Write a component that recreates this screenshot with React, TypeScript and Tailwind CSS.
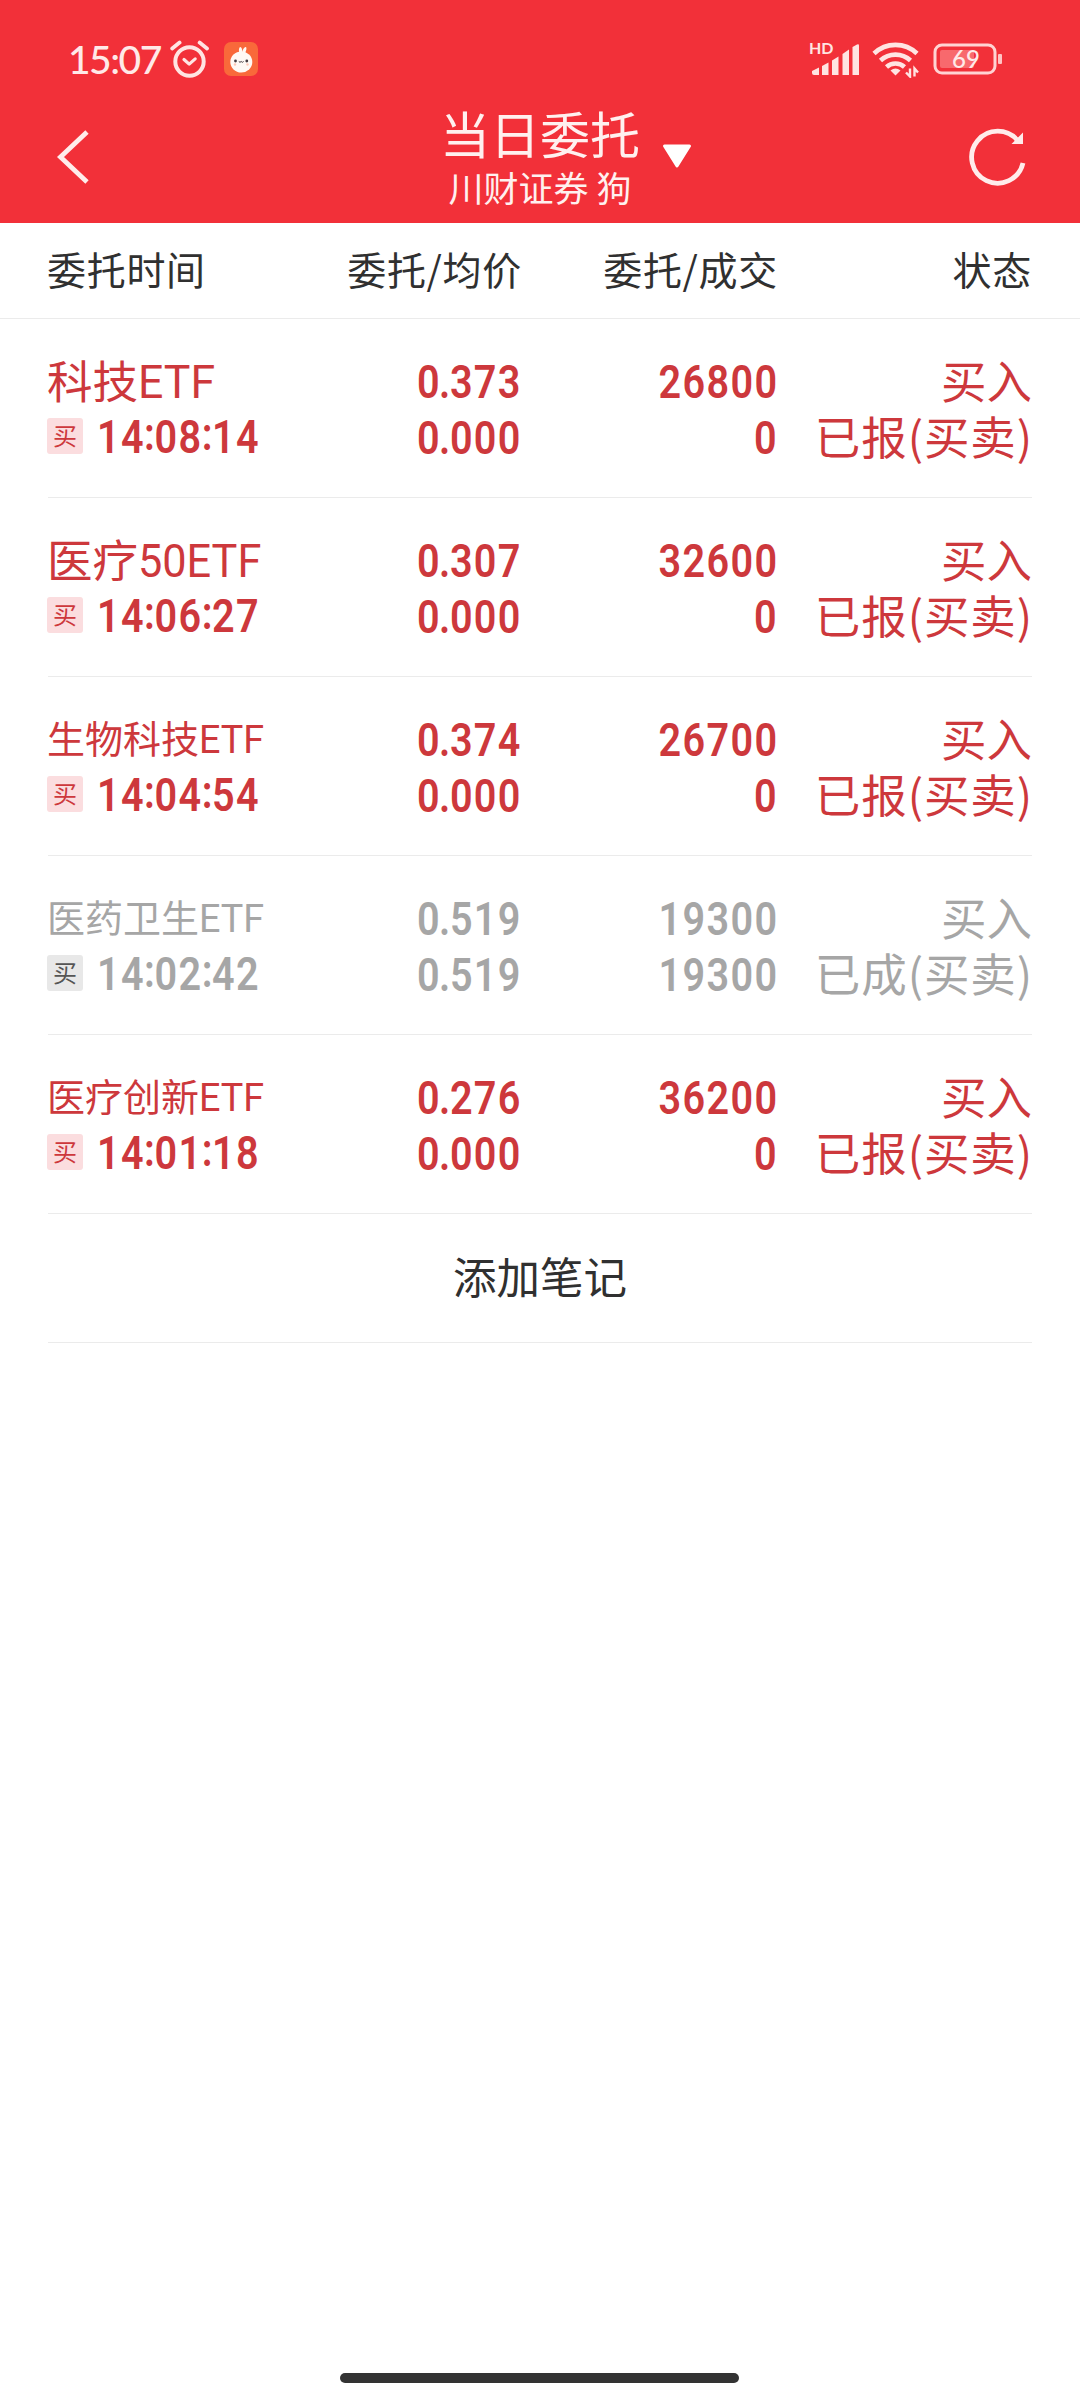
import React from "react";
import clsx from "clsx";

type Order = {
  id: number;
  name: string;
  code: string;
  time: string;
  price: string;
  avgPrice: string;
  amount: string;
  dealt: string;
  status: string;
  small?: boolean;
  done?: boolean;
};

const orders: Order[] = [
  { id: 1, name: "科技", code: "ETF", time: "14:08:14", price: "0.373", avgPrice: "0.000", amount: "26800", dealt: "0", status: "已报(买卖)" },
  { id: 2, name: "医疗", code: "50ETF", time: "14:06:27", price: "0.307", avgPrice: "0.000", amount: "32600", dealt: "0", status: "已报(买卖)" },
  { id: 3, name: "生物科技", code: "ETF", time: "14:04:54", price: "0.374", avgPrice: "0.000", amount: "26700", dealt: "0", status: "已报(买卖)", small: true },
  { id: 4, name: "医药卫生", code: "ETF", time: "14:02:42", price: "0.519", avgPrice: "0.519", amount: "19300", dealt: "19300", status: "已成(买卖)", small: true, done: true },
  { id: 5, name: "医疗创新", code: "ETF", time: "14:01:18", price: "0.276", avgPrice: "0.000", amount: "36200", dealt: "0", status: "已报(买卖)", small: true },
];

/* ================= STATUS BAR ================= */
const StatusBar = () => (
  <div className="flex h-[80px] items-end justify-between pl-[68px] pr-[75px]">
    <div className="flex h-[43px] items-center">
      <span className="mt-px w-[102px] whitespace-nowrap font-['Lato',sans-serif] text-[39px] leading-[43px] font-medium tracking-[-1.5px] text-[#ffe9e8]">
        15:07
      </span>
      <svg width="40" height="38" viewBox="0 0 40 38" fill="none" stroke="#ffe4e2" strokeLinecap="round">
        <circle cx="19.5" cy="21.5" r="14.2" strokeWidth="4" />
        <path d="M14 19.5l5.2 4.6 6-5.2" strokeWidth="3.2" strokeLinejoin="round" />
        <path d="M2.2 8.6l7.4-6M37 8.6l-7.4-6" strokeWidth="3.8" />
      </svg>
      <svg className="ml-[14px]" width="34" height="34" viewBox="0 0 34 34">
        <rect width="34" height="34" rx="7" fill="#f9693a" />
        <path d="M15.5 11c-1.2-3-.3-5.8.8-6 1.3 0 2 2.5 2 5 .6-3 2.2-5.4 3.5-5 1.2.6.6 3.8-.8 6.2z" fill="#fffaf5" />
        <ellipse cx="17.3" cy="20" rx="11" ry="10.5" fill="#fffaf5" />
        <circle cx="11.5" cy="19" r="1.4" fill="#453e42" />
        <circle cx="22.8" cy="19" r="1.4" fill="#453e42" />
        <path d="M14.8 19.5q1.2 1.6 2.4 0 1.2 1.6 2.4 0" stroke="#453e42" strokeWidth="1" fill="none" />
        <circle cx="11" cy="22.5" r="1.2" fill="#ffc9b8" />
        <circle cx="23.5" cy="22.5" r="1.2" fill="#ffc9b8" />
      </svg>
    </div>

    <div className="flex h-[43px] items-center">
      <div className="relative h-[36px] w-[52px]">
        <span className="absolute -top-px left-0 font-['Lato',sans-serif] text-[16px] leading-[16px] font-bold text-[#ffe4e2]">
          HD
        </span>
        <svg width="52" height="36" viewBox="0 0 52 36" fill="#ffe4e2">
          <path d="M3 30l7-3.5V34H5q-2 0-2-2z" />
          <path d="M13 25l6.5-3.5V34H13z" />
          <path d="M23 19.5l6.5-4V34H23z" />
          <path d="M33.5 13l6.5-4.5V34h-6.5z" />
          <path d="M43.5 6l4.5-2.5q2-1 2 1V34h-6.5z" />
        </svg>
      </div>
      <svg className="ml-[11px]" width="48" height="38" viewBox="0 0 48 38" fill="none" stroke="#ffe4e2" strokeWidth="4.6">
        <path d="M2 13.5a31 31 0 0 1 43 0" />
        <path d="M8.5 20.5a22 22 0 0 1 30 0" />
        <path d="M14.5 27a13.5 13.5 0 0 1 18 0" />
        <path d="M18.5 30.5q5-4 10 0l-5 5z" fill="#ffe4e2" stroke="none" />
        <path d="M38 28.5v8l-4-4M42.5 36.5v-8l3.5 4" strokeWidth="2.4" />
      </svg>
      <svg className="ml-[13px]" width="72" height="32" viewBox="0 0 72 32">
        <rect x="2" y="2" width="60" height="28" rx="7" fill="none" stroke="#ffd3d3" strokeWidth="3" />
        <rect x="7" y="7" width="34" height="18" rx="2" fill="#f8696d" />
        <rect x="65" y="11" width="4" height="10" rx="1" fill="#ffc4c4" />
        <text x="33" y="25" textAnchor="middle" fill="#ffe9e8" fontSize="24" fontWeight="500" fontFamily="Lato, sans-serif">
          69
        </text>
      </svg>
    </div>
  </div>
);

/* ================= TITLE BAR ================= */
const TitleBar = () => (
  <div className="flex h-[143px] items-start justify-between pl-[54px] pr-[50px] pt-[22px]">
    <svg className="mt-[25px]" width="40" height="60" viewBox="0 0 40 60" fill="none" stroke="#ffeceb" strokeWidth="4.8">
      <path d="M33 5L6.5 30 33 55" />
    </svg>

    <div className="ml-[73px] flex">
      <div className="flex w-[200px] flex-col items-center whitespace-nowrap text-[#fff0ef]">
        <h1 className="text-[50px] leading-[60px] font-normal">当日委托</h1>
        <p className="mt-[6px] text-[35px] leading-[38px] font-normal">川财证券 狗</p>
      </div>
      <svg className="ml-[21px] mt-[41px]" width="32" height="26" viewBox="0 0 32 26" fill="#fff" stroke="#fff" strokeWidth="3" strokeLinejoin="round">
        <path d="M3.5 3h25L16 23z" />
      </svg>
    </div>

    <svg className="mt-[24px]" width="64" height="60" viewBox="0 0 64 60" fill="none" stroke="#ffeceb" strokeWidth="4.8">
      <path d="M52 15A26 26 0 1 0 57 37" />
      <path d="M57 6.5v11.5H45.5z" fill="#ffeceb" stroke="none" />
    </svg>
  </div>
);

/* Narrow digits with tight separators */
const Num = ({ value, left }: { value: string; left?: boolean }) => (
  <span
    className={clsx(
      "inline-block scale-x-[0.86] font-['Roboto',sans-serif] text-[46px] font-semibold tracking-[1.6px]",
      left ? "origin-left" : "origin-right"
    )}
  >
    {value.split(/([.:])/).map((part, i) => (
      <span
        key={i}
        className={clsx(
          part === "." && "-ml-[2.5px] tracking-[-0.3px]",
          part === ":" && "relative -top-[3px] -ml-px tracking-[-0.4px]"
        )}
      >
        {part}
      </span>
    ))}
  </span>
);

const OrderRow = ({ order }: { order: Order }) => (
  <div
    className={clsx(
      "grid h-[179px] grid-cols-[218px_256px_256px_254px] grid-rows-[56px_56px] border-b border-[#ebebeb] pt-[35px] leading-[56px] whitespace-nowrap",
      order.done ? "text-[#a6a6a6]" : "text-[#cd383c]"
    )}
  >
    <div className={clsx("-ml-px flex", order.small ? "text-[38px]" : "text-[45.5px]")}>
      <span className="-mt-[3px]">{order.name}</span>
      <span
        className={clsx(
          "origin-left font-['Roboto',sans-serif]",
          order.small ? "scale-x-[0.98] text-[38.5px]" : "text-[46px]",
          !order.small && (order.code === "ETF" ? "scale-x-[0.97]" : "scale-x-[0.94]")
        )}
      >
        {order.code}
      </span>
    </div>
    <div className="text-right"><Num value={order.price} /></div>
    <div className="text-right"><Num value={order.amount} /></div>
    <div className="-mt-[3px] text-right text-[45.5px]">买入</div>

    <div className="flex items-center">
      <span
        className={clsx(
          "-ml-px -mt-[4px] size-[36px] shrink-0 rounded-[3px] text-center text-[24px] leading-[34px]",
          order.done ? "bg-[#e8e8e8] text-[#555555]" : "bg-[#fbdddf]"
        )}
      >
        买
      </span>
      <span className="ml-[14px] mt-[7px]">
        <Num value={order.time} left />
      </span>
    </div>
    <div className="text-right"><Num value={order.avgPrice} /></div>
    <div className="text-right"><Num value={order.dealt} /></div>
    <div className="-mt-[3px] -mr-px flex justify-end text-[45.5px] tracking-[0.9px]">{order.status}</div>
  </div>
);

const App = () => {
  return (
    <div className="flex h-[2400px] w-[1080px] flex-col bg-white font-['Noto_Sans_CJK_SC',sans-serif]">
      <header className="h-[223px] bg-[#f23039]">
        <StatusBar />
        <TitleBar />
      </header>

      {/* ===== Column heads ===== */}
      <div className="grid h-[96px] grid-cols-[218px_256px_256px_254px] border-b border-[#ebebeb] px-12 text-[39px] leading-[91px] tracking-[0.7px] whitespace-nowrap text-[#303030]">
        <div className="-ml-px">委托时间</div>
        <div className="text-right">委托/均价</div>
        <div className="text-right">委托/成交</div>
        <div className="text-right">状态</div>
      </div>

      {/* ===== Orders ===== */}
      <main className="grow px-12">
        {orders.map((order) => (
          <OrderRow key={order.id} order={order} />
        ))}
        <button className="block h-[129px] w-full border-b border-[#ebebeb] pb-[4px] text-[43.5px] text-[#303030]">
          添加笔记
        </button>
      </main>

      <div className="mr-[2px] mb-[17px] h-[10px] w-[399px] self-center rounded-full bg-[#333333]" />
    </div>
  );
};

export default App;
